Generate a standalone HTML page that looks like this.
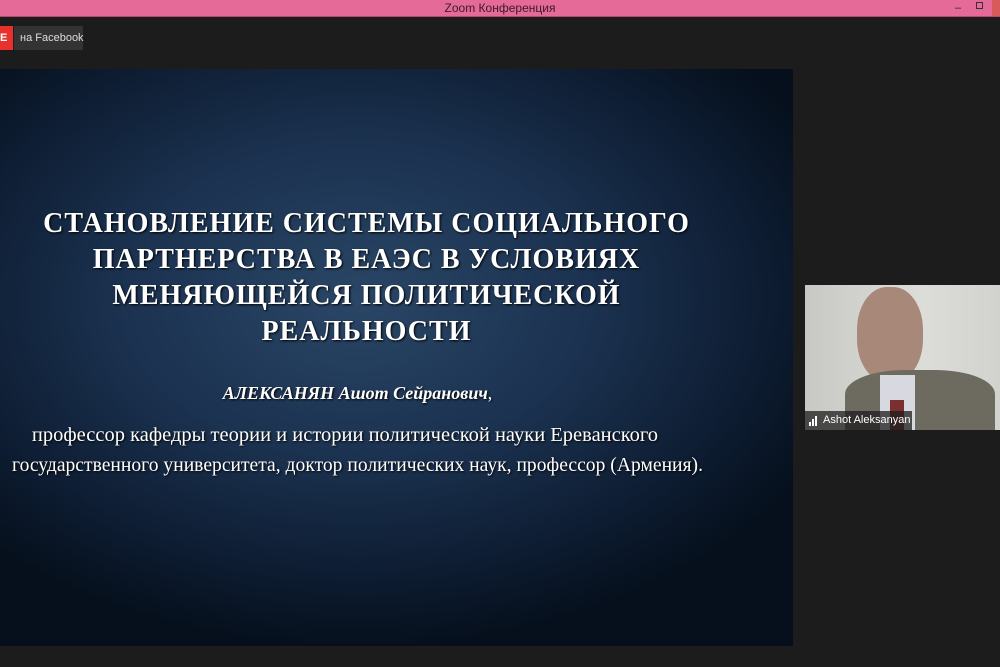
<!DOCTYPE html>
<html><head><meta charset="utf-8"><style>
*{margin:0;padding:0;box-sizing:border-box}
body{width:1000px;height:667px;background:#1c1c1c;overflow:hidden;position:relative;font-family:"Liberation Sans",sans-serif}
.top{position:absolute;left:0;top:0;width:1000px;height:17px;background:#e56a98;border-bottom:1px solid #b04a70;color:#3a1a28;font-size:12px;text-align:center;line-height:16px}
.slide{position:absolute;left:0;top:69px;width:793px;height:577px;
background:radial-gradient(ellipse 65% 60% at 45% 40%,#2a4666 0%,#1b3250 45%,#0d1c31 80%,#06101d 100%)}
.t{position:absolute;left:0;width:733px;text-align:center;color:#fff;font-family:"Liberation Serif",serif;font-weight:bold;font-size:28px;letter-spacing:1px;white-space:nowrap;text-shadow:1px 1px 2px #000}
.s{position:absolute;left:0;width:715px;text-align:center;color:#fff;font-family:"Liberation Serif",serif;font-size:19.6px;white-space:nowrap;text-shadow:1px 1px 2px #000}
.live{position:absolute;left:0;top:26px;width:13px;height:24px;background:#e8302c;color:#fff;font-size:11px;font-weight:bold;line-height:24px}
.fb{position:absolute;left:14px;top:26px;width:69px;height:24px;background:#333;color:#ddd;font-size:11px;line-height:24px;padding-left:6px;white-space:nowrap}
.vid{position:absolute;left:805px;top:285px;width:195px;height:145px;background:linear-gradient(90deg,#c8c8c4,#dcdcd8 60%,#d2d2ce);overflow:hidden}
</style></head><body>
<div class="top">Zoom Конференция<span style="position:absolute;left:955px;top:0;font-size:11px">–</span><span style="position:absolute;left:976px;top:2px;width:7px;height:7px;border:1px solid #333"></span><span style="position:absolute;right:0;top:0;width:8px;height:16px;background:#d85a5a"></span></div>
<div class="live">E</div><div class="fb">на Facebook</div>
<div class="slide">
<div class="t" style="top:139px">СТАНОВЛЕНИЕ СИСТЕМЫ СОЦИАЛЬНОГО</div>
<div class="t" style="top:175px">ПАРТНЕРСТВА В ЕАЭС В УСЛОВИЯХ</div>
<div class="t" style="top:211px">МЕНЯЮЩЕЙСЯ ПОЛИТИЧЕСКОЙ</div>
<div class="t" style="top:247px">РЕАЛЬНОСТИ</div>
<div class="s" style="top:314px;left:0;width:715px;font-size:18px"><b><i>АЛЕКСАНЯН Ашот Сейранович</i></b>,</div>
<div class="s" style="top:355px;left:-15px;width:720px;font-size:20.5px">профессор кафедры теории и истории политической науки Ереванского</div>
<div class="s" style="top:386px">государственного университета, доктор политических наук, профессор (Армения).</div>
</div>
<div class="vid">
<div style="position:absolute;left:40px;top:0;width:100px;height:145px;">
<div style="position:absolute;left:12px;top:2px;width:66px;height:95px;border-radius:45%;background:#a88878"></div>
<div style="position:absolute;left:0;top:85px;width:150px;height:60px;border-radius:40% 40% 0 0;background:#6d6a60"></div>
<div style="position:absolute;left:35px;top:90px;width:35px;height:55px;background:#d8d8e0"></div>
<div style="position:absolute;left:45px;top:115px;width:14px;height:30px;background:#7a3030"></div>
</div>
<div style="position:absolute;left:0;top:126px;height:19px;width:107px;background:rgba(30,30,30,.75);color:#fff;font-size:11px;line-height:19px;padding-left:18px;white-space:nowrap">Ashot Aleksanyan<span style="position:absolute;left:4px;bottom:4px;width:2px;height:4px;background:#fff"></span><span style="position:absolute;left:7px;bottom:4px;width:2px;height:7px;background:#fff"></span><span style="position:absolute;left:10px;bottom:4px;width:2px;height:10px;background:#fff"></span></div>
</div>
</body></html>
